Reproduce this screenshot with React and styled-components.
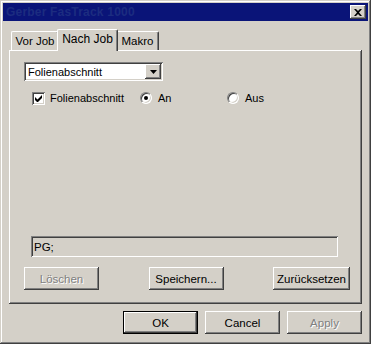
import styled, { createGlobalStyle, css } from 'styled-components';

const GlobalStyle = createGlobalStyle`
  html, body {
    margin: 0;
    padding: 0;
    background: #d4d0c8;
  }
  body {
    font-family: "Liberation Sans", Arial, sans-serif;
    font-size: 11px;
    color: #000;
  }
`;

const raised = css`
  box-shadow: inset -1px -1px #404040, inset 1px 1px #fff,
    inset -2px -2px #808080, inset 2px 2px #d4d0c8;
`;

const sunken = css`
  box-shadow: inset 1px 1px #808080, inset -1px -1px #fff,
    inset 2px 2px #404040, inset -2px -2px #d4d0c8;
`;

const Window = styled.div`
  width: 371px;
  height: 344px;
  box-sizing: border-box;
  padding: 3px;
  background: #d4d0c8;
  box-shadow: inset -1px -1px #404040, inset 1px 1px #d4d0c8,
    inset -2px -2px #808080, inset 2px 2px #fff;
  display: flex;
  flex-direction: column;
`;

const TitleBar = styled.div`
  height: 18px;
  background: #0a1478;
  display: flex;
  align-items: center;
  justify-content: space-between;
  padding: 0 2px 0 3px;
`;

const Title = styled.span`
  font-weight: bold;
  font-size: 12px;
  color: #1c2c80;
  letter-spacing: 0.2px;
`;

const CloseButton = styled.div`
  width: 16px;
  height: 14px;
  background: #d4d0c8;
  ${raised};
  display: flex;
  align-items: center;
  justify-content: center;
`;

const Body = styled.div`
  flex: 1;
  display: flex;
  flex-direction: column;
  padding: 8px 6px 0 6px;
`;

const TabStrip = styled.div`
  display: flex;
  align-items: flex-end;
  height: 21px;
  padding-left: 2px;
`;

const Tab = styled.div`
  box-sizing: border-box;
  height: ${(p) => (p.$active ? 22 : 19)}px;
  width: ${(p) => p.$w}px;
  margin: ${(p) => (p.$active ? '0 -2px -1px -2px' : '0')};
  position: relative;
  z-index: ${(p) => (p.$active ? 2 : 1)};
  background: #d4d0c8;
  border-top: 1px solid #fff;
  border-left: 1px solid #fff;
  border-right: 1px solid #404040;
  border-radius: 2px 2px 0 0;
  box-shadow: inset -1px 0 #808080;
  display: flex;
  align-items: center;
  justify-content: center;
  padding-bottom: ${(p) => (p.$active ? 3 : 1)}px;
  font-size: ${(p) => (p.$active ? 12 : 11.5)}px;
`;

const Panel = styled.div`
  height: 254px;
  box-sizing: border-box;
  background: #d4d0c8;
  box-shadow: inset -1px -1px #404040, inset 1px 1px #fff,
    inset -2px -2px #808080;
  display: flex;
  flex-direction: column;
  padding: 12px 12px 14px 15px;
`;

const Combo = styled.div`
  width: 139px;
  height: 19px;
  box-sizing: border-box;
  background: #fff;
  ${sunken};
  display: flex;
  align-items: center;
  padding: 2px;
`;

const ComboText = styled.span`
  flex: 1;
  padding-left: 2px;
  font-size: 11px;
`;

const ComboArrow = styled.div`
  width: 16px;
  height: 15px;
  background: #d4d0c8;
  ${raised};
  display: flex;
  align-items: center;
  justify-content: center;
`;

const OptionRow = styled.div`
  display: flex;
  align-items: center;
  margin-top: 10px;
  padding-left: 8px;
  height: 14px;
`;

const Option = styled.label`
  display: flex;
  align-items: center;
  gap: 5px;
  width: ${(p) => p.$w}px;
  font-size: 11px;
`;

const CheckBox = styled.span`
  width: 13px;
  height: 13px;
  box-sizing: border-box;
  background: #fff;
  ${sunken};
  display: flex;
  align-items: center;
  justify-content: center;
`;

const Radio = styled.span`
  width: 12px;
  height: 12px;
  box-sizing: border-box;
  border-radius: 50%;
  background: #fff;
  border-top: 1px solid #808080;
  border-left: 1px solid #808080;
  border-right: 1px solid #fff;
  border-bottom: 1px solid #fff;
  box-shadow: inset 1px 1px #404040, inset -1px -1px #d4d0c8;
  display: flex;
  align-items: center;
  justify-content: center;
  margin-right: 1px;

  &::after {
    content: '';
    width: 4px;
    height: 4px;
    border-radius: 50%;
    background: ${(p) => (p.$checked ? '#000' : 'transparent')};
  }
`;

const Spacer = styled.div`
  flex: 1;
`;

const CommandField = styled.div`
  width: 307px;
  height: 21px;
  box-sizing: border-box;
  margin-left: 7px;
  ${sunken};
  display: flex;
  align-items: center;
  padding-left: 3px;
  font-size: 11.5px;
`;

const ButtonRow = styled.div`
  display: flex;
  justify-content: space-between;
  margin-top: 10px;
`;

const Button = styled.div`
  width: ${(p) => p.$w || 75}px;
  height: 23px;
  box-sizing: border-box;
  background: #d4d0c8;
  display: flex;
  align-items: center;
  justify-content: center;
  font-size: 11.5px;
  ${(p) =>
    p.$default
      ? css`
          box-shadow: inset 0 0 0 1px #000, inset -2px -2px #404040,
            inset 2px 2px #fff, inset -3px -3px #808080;
        `
      : raised}
  ${(p) =>
    p.$disabled &&
    css`
      color: #808080;
      text-shadow: 1px 1px #fff;
    `}
`;

const Footer = styled.div`
  display: flex;
  justify-content: flex-end;
  gap: 7px;
  margin-top: 7px;
`;

const CloseIcon = () => (
  <svg width="8" height="7" viewBox="0 0 8 7">
    <path d="M0 0h2l2 2 2-2h2L5 3.5 8 7H6L4 5 2 7H0l3-3.5z" fill="#000" />
  </svg>
);

const ArrowIcon = () => (
  <svg width="7" height="4" viewBox="0 0 7 4">
    <path d="M0 0h7L3.5 4z" fill="#000" />
  </svg>
);

const CheckIcon = () => (
  <svg width="7" height="7" viewBox="0 0 7 7">
    <path d="M0 2v3l2 2h1l4-4V0L2.5 4.5z" fill="#000" />
  </svg>
);

const App = () => {
  return (
    <>
      <GlobalStyle />
      <Window>
        <TitleBar>
          <Title>Gerber FasTrack 1000</Title>
          <CloseButton>
            <CloseIcon />
          </CloseButton>
        </TitleBar>
        <Body>
          <TabStrip>
            <Tab $w={48}>Vor Job</Tab>
            <Tab $w={61} $active>
              Nach Job
            </Tab>
            <Tab $w={43}>Makro</Tab>
          </TabStrip>
          <Panel>
            <Combo>
              <ComboText>Folienabschnitt</ComboText>
              <ComboArrow>
                <ArrowIcon />
              </ComboArrow>
            </Combo>
            <OptionRow>
              <Option $w={108}>
                <CheckBox>
                  <CheckIcon />
                </CheckBox>
                Folienabschnitt
              </Option>
              <Option $w={87}>
                <Radio $checked />
                An
              </Option>
              <Option>
                <Radio />
                Aus
              </Option>
            </OptionRow>
            <Spacer />
            <CommandField>PG;</CommandField>
            <ButtonRow>
              <Button $disabled>Löschen</Button>
              <Button>Speichern...</Button>
              <Button $w={77}>Zurücksetzen</Button>
            </ButtonRow>
          </Panel>
          <Footer>
            <Button $default>OK</Button>
            <Button>Cancel</Button>
            <Button $disabled>Apply</Button>
          </Footer>
        </Body>
      </Window>
    </>
  );
};

export default App;
